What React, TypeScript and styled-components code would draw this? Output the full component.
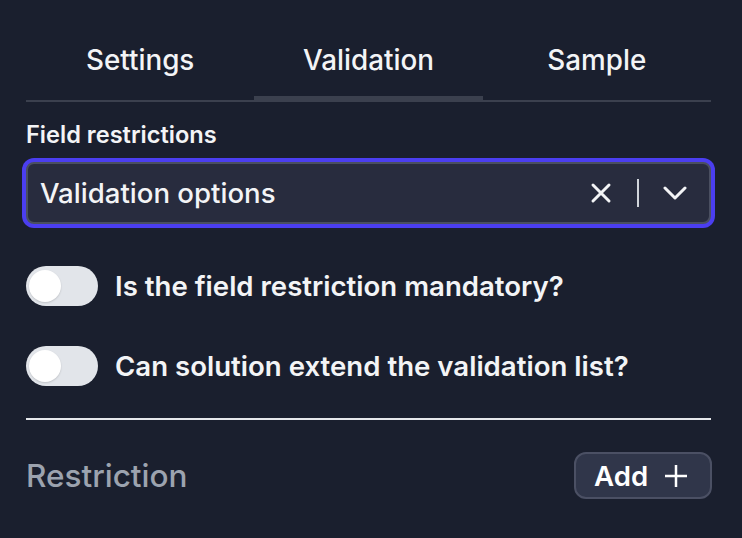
import React, { useState } from "react";
import styled, { createGlobalStyle } from "styled-components";

const Global = createGlobalStyle`
  html, body { margin: 0; padding: 0; background: #1a1f2e; }
  body { font-family: Inter, "Noto Sans", sans-serif; color: #f3f4f6; }
  * { box-sizing: border-box; }
`;

const Page = styled.div`
  width: 742px;
  height: 538px;
  padding: 0 31px 0 26px;
  display: flex;
  flex-direction: column;
`;

const TabList = styled.div`
  display: grid;
  grid-template-columns: repeat(3, 1fr);
  margin-top: 41px;
  border-bottom: 2px solid #3b404e;
`;

const Tab = styled.button<{ $active?: boolean }>`
  background: none;
  border: none;
  padding: 0 0 ${(p) => (p.$active ? "17px" : "23px")};
  margin-bottom: -2px;
  border-bottom: ${(p) => (p.$active ? "6px solid #3b404e" : "0")};
  font-family: Inter, sans-serif;
  font-size: 27.8px;
  font-weight: 500;
  color: #f3f4f6;
  line-height: 38px;
  cursor: pointer;
`;

const Label = styled.div`
  margin-top: 19px;
  font-size: 23.6px;
  font-weight: 600;
  line-height: 28px;
  color: #f3f4f6;
`;

const Select = styled.div`
  margin-top: 13px;
  height: 62px;
  border: 2px solid #4a4f60;
  border-radius: 8px;
  background: #282c3e;
  box-shadow: 0 0 0 4px #4b3ef0;
  display: flex;
  align-items: center;
  padding: 0 22px 0 12px;
`;

const SelectText = styled.span`
  flex: 1;
  font-size: 27.6px;
  font-weight: 500;
  line-height: 34px;
  color: #f3f4f6;
`;

const Controls = styled.div`
  display: flex;
  align-items: center;
`;

const Sep = styled.span`
  width: 2px;
  height: 28px;
  background: #d1d5db;
  margin: 0 24px 0 25px;
`;

const ToggleRow = styled.label<{ $gap: number }>`
  display: flex;
  align-items: center;
  gap: 17px;
  margin-top: ${(p) => p.$gap}px;
  cursor: pointer;
`;

const Track = styled.span<{ $on: boolean }>`
  position: relative;
  width: 72px;
  height: 40px;
  border-radius: 20px;
  background: ${(p) => (p.$on ? "#4b3ef0" : "#e2e5ea")};
  flex-shrink: 0;
`;

const Knob = styled.span<{ $on: boolean }>`
  position: absolute;
  top: 4px;
  left: ${(p) => (p.$on ? "36px" : "3px")};
  width: 32px;
  height: 32px;
  border-radius: 50%;
  background: #ffffff;
  box-shadow: 0 1px 2px rgba(0, 0, 0, 0.15);
`;

const ToggleText = styled.span`
  font-size: 27.6px;
  font-weight: 600;
  line-height: 34px;
  color: #f3f4f6;
`;

const Divider = styled.hr`
  margin: 32px 0 0;
  border: none;
  height: 2px;
  background: #e5e7eb;
`;

const Footer = styled.div`
  margin-top: 32px;
  display: flex;
  align-items: center;
  justify-content: space-between;
`;

const Heading = styled.span`
  font-size: 31.5px;
  font-weight: 500;
  line-height: 40px;
  color: #9ca3af;
`;

const AddButton = styled.button`
  height: 47px;
  width: 138px;
  margin-right: -1px;
  border-radius: 12px;
  border: 2px solid #4b5064;
  background: #30364a;
  color: #ffffff;
  font-family: Inter, sans-serif;
  font-size: 27.6px;
  font-weight: 600;
  line-height: 34px;
  display: flex;
  align-items: center;
  justify-content: flex-start;
  gap: 16px;
  padding: 0 0 0 18px;
  cursor: pointer;
`;

function Toggle({ label, gap }: { label: string; gap: number }) {
  const [on, setOn] = useState(false);
  return (
    <ToggleRow $gap={gap} onClick={() => setOn(!on)}>
      <Track $on={on}>
        <Knob $on={on} />
      </Track>
      <ToggleText>{label}</ToggleText>
    </ToggleRow>
  );
}

export default function App() {
  const [tab, setTab] = useState(1);
  const tabs = ["Settings", "Validation", "Sample"];
  return (
    <>
      <Global />
      <Page>
        <TabList>
          {tabs.map((t, i) => (
            <Tab key={t} $active={tab === i} onClick={() => setTab(i)}>
              {t}
            </Tab>
          ))}
        </TabList>
        <Label>Field restrictions</Label>
        <Select>
          <SelectText>Validation options</SelectText>
          <Controls>
            <svg width="22" height="22" viewBox="0 0 22 22" fill="none">
              <path d="M3 3L19 19M19 3L3 19" stroke="#f3f4f6" strokeWidth="3" strokeLinecap="round" />
            </svg>
            <Sep />
            <svg width="24" height="14" viewBox="0 0 24 14" fill="none">
              <path d="M2 2L12 12L22 2" stroke="#f3f4f6" strokeWidth="3" strokeLinecap="round" strokeLinejoin="round" />
            </svg>
          </Controls>
        </Select>
        <Toggle gap={42} label="Is the field restriction mandatory?" />
        <Toggle gap={40} label="Can solution extend the validation list?" />
        <Divider />
        <Footer>
          <Heading>Restriction</Heading>
          <AddButton>
            Add
            <svg width="24" height="24" viewBox="0 0 24 24" fill="none">
              <path d="M12 1V23M1 12H23" stroke="#ffffff" strokeWidth="2.5" />
            </svg>
          </AddButton>
        </Footer>
      </Page>
    </>
  );
}
